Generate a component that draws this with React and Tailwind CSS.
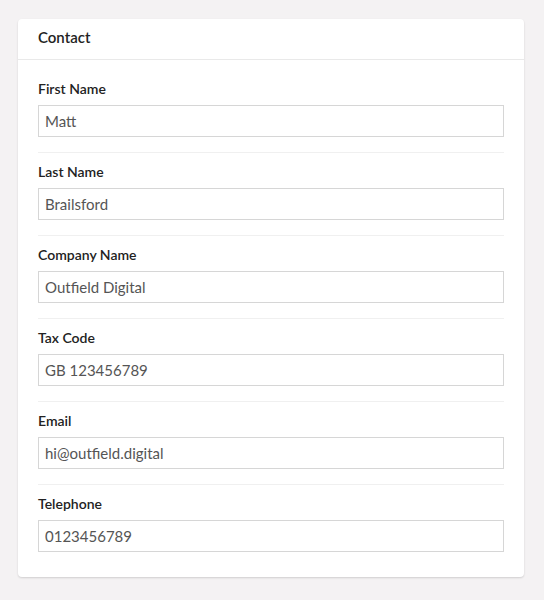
const fields = [
  { label: 'First Name', value: 'Matt' },
  { label: 'Last Name', value: 'Brailsford' },
  { label: 'Company Name', value: 'Outfield Digital' },
  { label: 'Tax Code', value: 'GB 123456789' },
  { label: 'Email', value: 'hi@outfield.digital' },
  { label: 'Telephone', value: '0123456789' },
];

const Field = ({ label, value, last }) => (
  <div className={`pt-[9px] ${last ? '' : 'pb-[15px] border-b border-[#f0f0f0]'}`}>
    <label className="block text-[14px] leading-[20px] font-semibold text-[#222]">{label}</label>
    <input
      readOnly
      value={value}
      className="mt-[6px] block w-full h-[32px] px-[6px] border border-[#d6d6d6] bg-white text-[15px] text-[#555] outline-none"
    />
  </div>
);

export default function App() {
  return (
    <div
      className="min-h-screen bg-[#f4f2f3] pl-[18px] pr-[20px] pt-[19px] pb-[23px]"
      style={{ fontFamily: 'Lato, "Noto Sans", sans-serif' }}
    >
      <div className="bg-white rounded-[4px] shadow-[0_1px_2px_rgba(0,0,0,0.15)]">
        <div className="h-[41px] px-[20px] pt-[9px] border-b border-[#e9e9e9]">
          <h2 className="text-[15px] leading-[18px] font-semibold text-[#222]">Contact</h2>
        </div>
        <div className="px-[20px] pt-[10px] pb-[25px]">
          {fields.map((f, i) => (
            <Field key={f.label} {...f} last={i === fields.length - 1} />
          ))}
        </div>
      </div>
    </div>
  );
}
